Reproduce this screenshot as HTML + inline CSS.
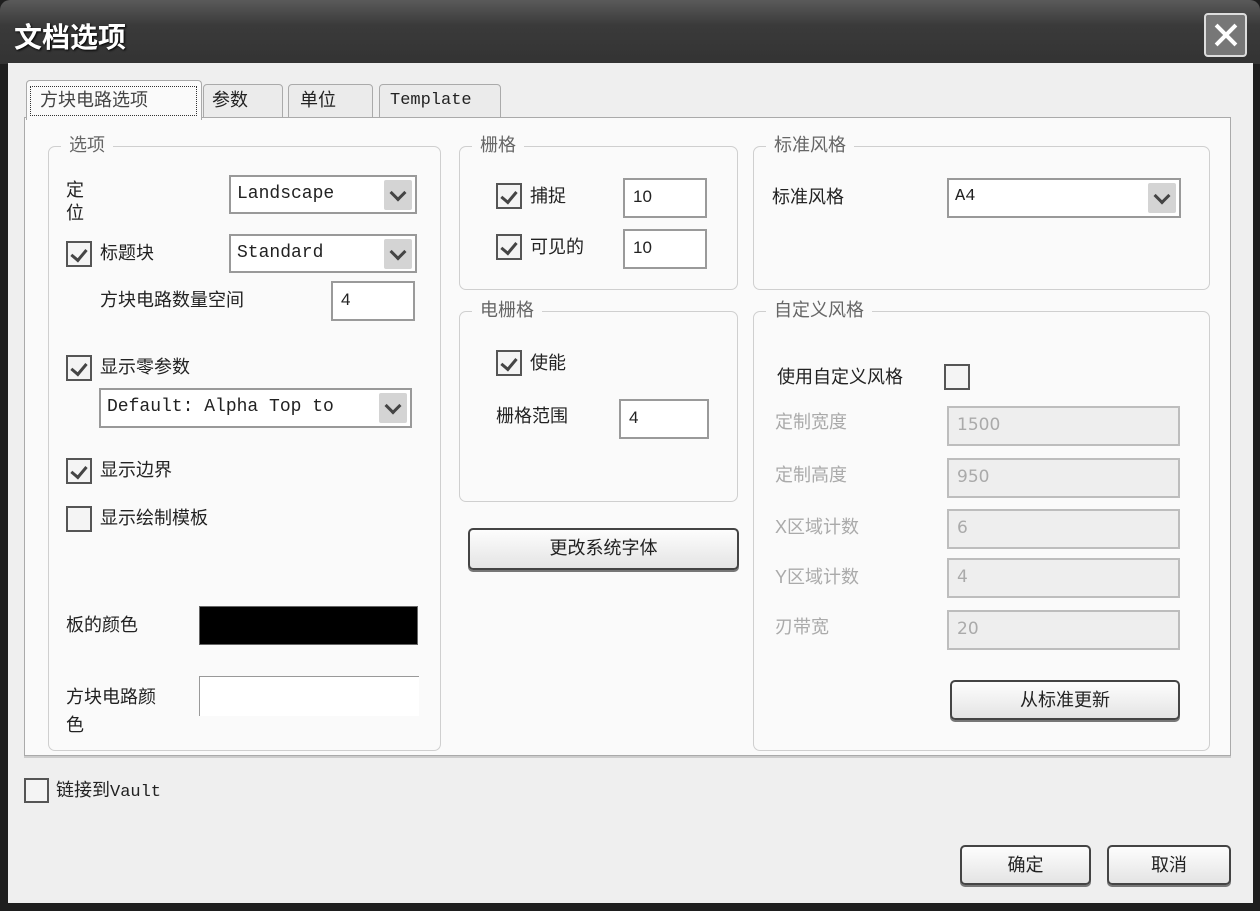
<!DOCTYPE html>
<html><head><meta charset="utf-8"><style>
*{margin:0;padding:0;box-sizing:border-box}
body{width:1260px;height:911px;background:#1e1e1e;position:relative;overflow:hidden;font-family:"Liberation Sans","Noto Sans CJK SC",sans-serif;font-size:18px;color:#222}
.a{position:absolute}
.t{position:absolute;white-space:nowrap;line-height:20px}
.mono{font-family:"Liberation Mono","Noto Sans CJK SC",monospace}
.grp{position:absolute;border:1.5px solid #cfcfcf;border-radius:7px}
.gt{position:absolute;background:#fafafa;padding:0 8px;color:#666;line-height:20px;top:-12px;left:12px}
.cb{position:absolute;width:26px;height:26px;border:2px solid #555;background:#f4f4f4}
.cb.k::after{content:"";position:absolute;left:6px;top:3px;width:7px;height:12px;border:solid #444;border-width:0 3px 3px 0;transform:rotate(40deg)}
.in{position:absolute;border:2px solid #9a9a9a;background:#fff;padding-left:8px;line-height:34px;font-size:17px}
.in.d{background:#eeeeee;border-color:#bdbdbd;color:#aaa;font-family:"DejaVu Sans",sans-serif}
.dd{position:absolute;border:2px solid #999;background:#fff;padding-left:6px;line-height:34px;font-size:18px}
.dd .ar{position:absolute;right:3px;top:3px;width:28px;height:30px;background:#d4d4d4;border-radius:2px}
.dd .ar::after{content:"";position:absolute;left:8px;top:7px;width:9px;height:9px;border:solid #444;border-width:0 3px 3px 0;transform:rotate(45deg)}
.btn{position:absolute;border:2px solid #444;border-radius:5px;background:linear-gradient(#fdfdfd,#e4e4e4);text-align:center;line-height:36px;box-shadow:0 2px 0 #777}
.gr{color:#aaa}
</style></head><body>
<div class="a" style="left:0;top:0;width:1260px;height:64px;background:linear-gradient(#5a5a5a,#3a3a3a 40%,#333);border-radius:10px 10px 0 0"></div>
<div class="t" style="left:14px;top:22px;font-size:28px;line-height:32px;font-weight:bold;color:#fff;text-shadow:1px 1px 2px #000">文档选项</div>
<div class="a" style="left:1204px;top:13px;width:43px;height:44px;border:2px solid #ddd;border-radius:4px;background:#777"></div>
<div class="a" style="left:1212px;top:33px;width:28px;height:4px;background:#fff;transform:rotate(45deg)"></div>
<div class="a" style="left:1212px;top:33px;width:28px;height:4px;background:#fff;transform:rotate(-45deg)"></div>
<div class="a" style="left:8px;top:63px;width:1245px;height:840px;background:#efefef"></div>
<!-- tabs -->
<div class="a" style="left:203px;top:84px;width:80px;height:34px;background:#ebebeb;border:1.5px solid #aaa;border-radius:4px 4px 0 0"></div>
<div class="t" style="left:212px;top:90px">参数</div>
<div class="a" style="left:288px;top:84px;width:85px;height:34px;background:#ebebeb;border:1.5px solid #aaa;border-radius:4px 4px 0 0"></div>
<div class="t" style="left:300px;top:90px">单位</div>
<div class="a" style="left:379px;top:84px;width:122px;height:34px;background:#ebebeb;border:1.5px solid #aaa;border-radius:4px 4px 0 0"></div>
<div class="t mono" style="left:390px;top:91px;font-size:17px">Template</div>
<div class="a" style="left:24px;top:117px;width:1207px;height:639px;background:#fafafa;border:1.5px solid #aaa;box-shadow:0 2px 0 #ccc"></div>
<div class="a" style="left:26px;top:80px;width:176px;height:40px;background:#fafafa;border:1.5px solid #aaa;border-bottom:none;border-radius:4px 4px 0 0"></div>
<div class="a" style="left:30px;top:86px;width:167px;height:30px;border:1.5px dotted #333"></div>
<div class="t" style="left:40px;top:90px;color:#444">方块电路选项</div>
<!-- 选项 -->
<div class="grp" style="left:48px;top:146px;width:393px;height:605px"><div class="gt">选项</div></div>
<div class="t" style="left:66px;top:180px">定</div><div class="t" style="left:66px;top:203px">位</div>
<div class="dd mono" style="left:229px;top:175px;width:188px;height:39px">Landscape<div class="ar"></div></div>
<div class="cb k" style="left:66px;top:241px"></div><div class="t" style="left:100px;top:243px">标题块</div>
<div class="dd mono" style="left:229px;top:234px;width:188px;height:39px">Standard<div class="ar"></div></div>
<div class="t" style="left:100px;top:290px">方块电路数量空间</div>
<div class="in" style="left:331px;top:281px;width:84px;height:40px">4</div>
<div class="cb k" style="left:66px;top:355px"></div><div class="t" style="left:100px;top:357px">显示零参数</div>
<div class="dd mono" style="left:99px;top:388px;width:313px;height:40px;overflow:hidden">Default: Alpha Top to<div class="ar" style="background:#d4d4d4"></div></div>
<div class="cb k" style="left:66px;top:458px"></div><div class="t" style="left:100px;top:460px">显示边界</div>
<div class="cb" style="left:66px;top:506px"></div><div class="t" style="left:100px;top:508px">显示绘制模板</div>
<div class="t" style="left:66px;top:615px">板的颜色</div>
<div class="a" style="left:199px;top:606px;width:219px;height:39px;background:#000;border:1px solid #666"></div>
<div class="t" style="left:66px;top:687px">方块电路颜</div><div class="t" style="left:66px;top:715px">色</div>
<div class="a" style="left:199px;top:676px;width:220px;height:40px;background:#fff;border-left:1.5px solid #999;border-top:1.5px solid #999"></div>
<!-- 栅格 -->
<div class="grp" style="left:459px;top:146px;width:279px;height:144px"><div class="gt">栅格</div></div>
<div class="cb k" style="left:496px;top:183px"></div><div class="t" style="left:530px;top:186px">捕捉</div>
<div class="in" style="left:623px;top:178px;width:84px;height:40px">10</div>
<div class="cb k" style="left:496px;top:234px"></div><div class="t" style="left:530px;top:237px">可见的</div>
<div class="in" style="left:623px;top:229px;width:84px;height:40px">10</div>
<!-- 电栅格 -->
<div class="grp" style="left:459px;top:311px;width:279px;height:191px"><div class="gt">电栅格</div></div>
<div class="cb k" style="left:496px;top:350px"></div><div class="t" style="left:530px;top:353px">使能</div>
<div class="t" style="left:496px;top:406px">栅格范围</div>
<div class="in" style="left:619px;top:399px;width:90px;height:40px">4</div>
<div class="btn" style="left:468px;top:528px;width:271px;height:42px">更改系统字体</div>
<!-- 标准风格 -->
<div class="grp" style="left:753px;top:146px;width:457px;height:144px"><div class="gt">标准风格</div></div>
<div class="t" style="left:772px;top:187px">标准风格</div>
<div class="dd mono" style="left:947px;top:178px;width:234px;height:40px;font-size:17px">A4<div class="ar"></div></div>
<!-- 自定义风格 -->
<div class="grp" style="left:753px;top:311px;width:457px;height:440px"><div class="gt">自定义风格</div></div>
<div class="t" style="left:777px;top:367px">使用自定义风格</div>
<div class="cb" style="left:944px;top:364px"></div>
<div class="t gr" style="left:775px;top:412px">定制宽度</div><div class="in d" style="left:947px;top:406px;width:233px;height:40px">1500</div>
<div class="t gr" style="left:775px;top:465px">定制高度</div><div class="in d" style="left:947px;top:458px;width:233px;height:40px">950</div>
<div class="t gr" style="left:775px;top:517px">X区域计数</div><div class="in d" style="left:947px;top:509px;width:233px;height:40px">6</div>
<div class="t gr" style="left:775px;top:567px">Y区域计数</div><div class="in d" style="left:947px;top:558px;width:233px;height:40px">4</div>
<div class="t gr" style="left:775px;top:617px">刃带宽</div><div class="in d" style="left:947px;top:610px;width:233px;height:40px">20</div>
<div class="btn" style="left:950px;top:680px;width:230px;height:40px">从标准更新</div>
<!-- bottom -->
<div class="cb" style="left:24px;top:778px;width:25px;height:25px"></div>
<div class="t" style="left:56px;top:780px">链接到<span class="mono" style="font-size:17px">Vault</span></div>
<div class="btn" style="left:960px;top:845px;width:131px;height:40px">确定</div>
<div class="btn" style="left:1107px;top:845px;width:124px;height:40px">取消</div>
</body></html>
